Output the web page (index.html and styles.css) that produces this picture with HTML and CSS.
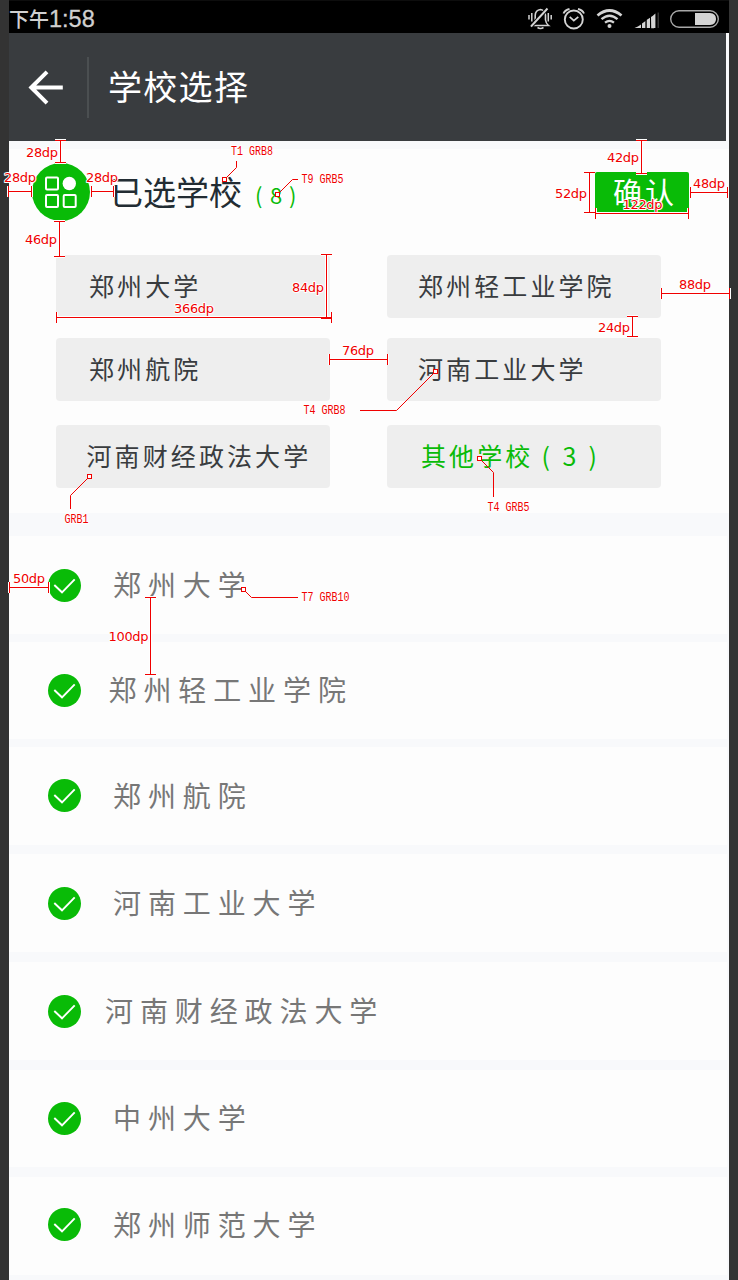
FILE: index.html
```html
<!DOCTYPE html>
<html lang="zh-CN">
<head>
<meta charset="utf-8">
<title>学校选择</title>
<link rel="stylesheet" href="styles.css">
</head>
<body>
<div class="phone">
  <div class="status">
    <div class="clock"><span class="clock-cn">下午</span><span class="clock-num">1:58</span></div>
    <svg class="status-icons" width="196" height="33" viewBox="526 0 196 33">
      <g fill="none" stroke="#d4d4d4" stroke-width="1.6">
        <path d="M532.500 25.500H548.500Q546 23.500 545.500 20V15.500Q545 10 540.500 9.500Q535.500 10 535.200 15.500V20Q535 23.500 532.500 25.500Z"/>
        <path d="M531 26.500L547.500 8.500" stroke="#000" stroke-width="4"/>
        <path d="M531 26.500L547.500 8.500" stroke-width="1.900"/>
        <path d="M537.500 27.500Q540.500 29.500 543.500 27.500"/>
        <path d="M529 15V19.500M531.800 13V21.500M548.300 13V21.500M551.200 15V19.500" stroke-width="1.500"/>
        <circle cx="573.800" cy="19.500" r="9" stroke-width="1.900"/>
        <path d="M569.700 16.800L573.800 20.700L578.300 16.800" stroke-width="1.700"/>
        <path d="M563.500 13.500Q565 10 569.500 9M578 9Q582.500 10 584 13.500" stroke-width="1.900"/>
        <path d="M597.500 15.500Q609.500 5.500 621.500 15.500" stroke-width="2.800"/>
        <path d="M601.500 19.200Q609.500 12.300 617.500 19.200" stroke-width="2.400"/>
        <path d="M605 22.700Q609.500 19 614 22.700" stroke-width="2.200"/>
      </g>
      <g fill="#d4d4d4">
        <circle cx="609.500" cy="26" r="2"/>
        <path d="M634.500 28Q638 26.500 641 24.500V28ZM642 23.500L645.500 21V28H642ZM646.500 20L650 17.800V28H646.500ZM651 17L654 15V28.300H651.200ZM652 16.500L655.400 13.500V28H652Z"/>
        <path d="M641.100 14h.8v14h-.8zM645.700 14h.8v14h-.8zM650.200 14h.8v14h-.8z" fill="#000"/>
        <path d="M657.500 12.500h1.500V28h-1.500z" fill="#333"/>
        <path d="M695 13H710Q716 13.500 716 19Q716 24.500 710 25H695Z"/>
      </g>
      <rect x="670.700" y="10.700" width="47.600" height="16.600" rx="8.300" fill="none" stroke="#a8a8a8" stroke-width="1.400"/>
    </svg>
  </div>

  <div class="header">
    <svg class="back" width="36" height="36" viewBox="28 70 36 36" fill="none" stroke="#fff" stroke-width="4">
      <path d="M47 71.800L31.300 87.500L47 103.200M31.500 87.500H62.800"/>
    </svg>
    <div class="divider"></div>
    <h1 class="title">学校选择</h1>
  </div>

  <div class="panel">
    <div class="picked">
      <svg class="picked-icon" width="58" height="58" viewBox="0 0 58 58">
        <circle cx="29" cy="29" r="29" fill="#09bb07"/>
        <g fill="none" stroke="#fff" stroke-width="2">
          <rect x="14" y="14.500" width="12" height="12" rx="1"/>
          <rect x="14" y="32" width="12" height="12" rx="1"/>
          <rect x="31.700" y="32" width="12" height="12" rx="1"/>
        </g>
        <circle cx="37.300" cy="20.500" r="6.700" fill="#fff"/>
      </svg>
      <span class="picked-label">已选学校</span>
      <span class="picked-count"><i>(</i><i>8</i><i>)</i></span>
      <button class="confirm">确认</button>
    </div>
    <div class="chips">
      <div class="chip">郑州大学</div>
      <div class="chip chip-right">郑州轻工业学院</div>
      <div class="chip">郑州航院</div>
      <div class="chip chip-right">河南工业大学</div>
      <div class="chip chip-long">河南财经政法大学</div>
      <div class="chip chip-other">其他学校<i>(</i><i>3</i><i>)</i></div>
    </div>
  </div>

  <div class="list">
    <div class="row r1"><svg class="check" viewBox="0 0 33 33"><circle cx="16.500" cy="16.500" r="16.500"/><path d="M6.300 16L14 23.300L26.700 10.300"/></svg><span>郑州大学</span></div>
    <div class="row r2"><svg class="check" viewBox="0 0 33 33"><circle cx="16.500" cy="16.500" r="16.500"/><path d="M6.300 16L14 23.300L26.700 10.300"/></svg><span>郑州轻工业学院</span></div>
    <div class="row r3"><svg class="check" viewBox="0 0 33 33"><circle cx="16.500" cy="16.500" r="16.500"/><path d="M6.300 16L14 23.300L26.700 10.300"/></svg><span>郑州航院</span></div>
    <div class="row r4"><svg class="check" viewBox="0 0 33 33"><circle cx="16.500" cy="16.500" r="16.500"/><path d="M6.300 16L14 23.300L26.700 10.300"/></svg><span>河南工业大学</span></div>
    <div class="row r5"><svg class="check" viewBox="0 0 33 33"><circle cx="16.500" cy="16.500" r="16.500"/><path d="M6.300 16L14 23.300L26.700 10.300"/></svg><span>河南财经政法大学</span></div>
    <div class="row r6"><svg class="check" viewBox="0 0 33 33"><circle cx="16.500" cy="16.500" r="16.500"/><path d="M6.300 16L14 23.300L26.700 10.300"/></svg><span>中州大学</span></div>
    <div class="row r7"><svg class="check" viewBox="0 0 33 33"><circle cx="16.500" cy="16.500" r="16.500"/><path d="M6.300 16L14 23.300L26.700 10.300"/></svg><span>郑州师范大学</span></div>
  </div>
</div>

<!-- Dimension lines and style callouts -->
<svg class="specs" width="738" height="1280" viewBox="0 0 738 1280">
  <defs>
    <path id="dims" d="M55 140.500H66M60.500 140V163M55 162.500H66
      M8.500 186V197M8 191.500H32M31.500 186V197
      M91.500 186V197M91 191.500H114M113.500 186V197
      M54 221.500H65M59.500 221V257M54 256.500H65
      M636 140.500H647M641.500 140V174M636 173.500H647
      M584 172.500H595M589.500 172V213M584 212.500H595
      M595.500 208V219M595 213.500H689M688.500 208V219
      M690.500 187V198M690 192.500H728M727.500 187V198
      M56.500 312V323M56 317.500H332M331.500 312V323
      M321 254.500H332M326.500 254V319M321 318.500H332
      M329.500 354V365M329 359.500H388M387.500 354V365
      M661.500 288V299M661 293.500H730M729.500 288V299
      M627 316.500H638M632.500 316V337M627 336.500H638
      M9.500 582V593M9 587.500H49M48.500 582V593
      M145 597.500H156M150.500 597V675M145 674.500H156"/>
  </defs>
  <use href="#dims" class="halo"/>
  <use href="#dims" class="dim"/>
  <g class="leader">
    <path d="M236.500 161V167.500L226.500 177.500"/>
    <path d="M298 179.500H292.500L279.500 192.500"/>
    <path d="M360 410.500H396.500L433.500 373.500"/>
    <path d="M70.500 509V495.500L87.500 478.500"/>
    <path d="M493.500 497V472.500L481.500 460.500"/>
    <path d="M298 597.500H251.500L245.500 591.500"/>
  </g>
  <g class="anchor">
    <rect x="222.500" y="177.500" width="4" height="4"/>
    <rect x="275.500" y="192.500" width="4" height="4"/>
    <rect x="433.500" y="369.500" width="4" height="4"/>
    <rect x="87.500" y="474.500" width="4" height="4"/>
    <rect x="477.500" y="456.500" width="4" height="4"/>
    <rect x="241.500" y="587.500" width="4" height="4"/>
  </g>
  <g class="dp">
    <text x="26" y="157" textLength="32">28dp</text>
    <text x="4" y="182" textLength="32">28dp</text>
    <text x="86" y="182" textLength="32">28dp</text>
    <text x="25" y="244" textLength="32">46dp</text>
    <text x="607" y="162" textLength="32">42dp</text>
    <text x="555" y="198" textLength="32">52dp</text>
    <text x="693" y="188" textLength="32">48dp</text>
    <text x="622.500" y="209" textLength="40">122dp</text>
    <text x="292" y="292" textLength="32">84dp</text>
    <text x="174" y="313" textLength="40">366dp</text>
    <text x="342" y="355" textLength="32">76dp</text>
    <text x="679" y="289" textLength="32">88dp</text>
    <text x="598" y="332" textLength="32">24dp</text>
    <text x="13" y="583" textLength="32">50dp</text>
    <text x="108.500" y="641" textLength="40">100dp</text>
  </g>
  <g class="code">
    <text x="231" y="155" textLength="42" lengthAdjust="spacingAndGlyphs">T1 GRB8</text>
    <text x="301.500" y="183" textLength="42" lengthAdjust="spacingAndGlyphs">T9 GRB5</text>
    <text x="303.500" y="414" textLength="42" lengthAdjust="spacingAndGlyphs">T4 GRB8</text>
    <text x="64.500" y="523" textLength="24" lengthAdjust="spacingAndGlyphs">GRB1</text>
    <text x="487.500" y="511" textLength="42" lengthAdjust="spacingAndGlyphs">T4 GRB5</text>
    <text x="301.500" y="601" textLength="48" lengthAdjust="spacingAndGlyphs">T7 GRB10</text>
  </g>
</svg>
</body>
</html>
```
FILE: styles.css
```css
* { box-sizing: border-box; }
body {
  margin: 0;
  width: 738px;
  height: 1280px;
  overflow: hidden;
  padding: 0 9px;
  background: #333;
  position: relative;
  font-family: "Noto Sans CJK SC", sans-serif;
}
i { font-style: normal; }
.phone { width: 720px; height: 1280px; background: #f8f9fb; overflow: hidden; }

.status {
  height: 33px;
  background: #000;
  border-top: 1px solid #0d0d0d;
  display: flex;
  justify-content: space-between;
  align-items: flex-start;
  padding-right: 7px;
  color: #d0d0d0;
}
.status-icons { display: block; margin-top: -1px; }
.clock { display: flex; align-items: baseline; line-height: 35px; }
.clock-cn { font-size: 20px; font-weight: 500; }
.clock-num { font: 23.5px/35px "Liberation Sans", sans-serif; -webkit-text-stroke: 0.3px #d0d0d0; }

.header {
  width: 717px;
  height: 108px;
  background: #393c3f;
  display: flex;
  align-items: center;
  padding-left: 19px;
  color: #fff;
}
.back { display: block; margin-top: 1px; }
.divider { width: 2px; height: 61px; margin-left: 23px; background: #4b4f51; }
.title { margin: -2px 0 0 19px; font-size: 34px; font-weight: 400; letter-spacing: 1.3px; line-height: 50px; }

.panel { margin-top: 8px; height: 364px; background: #fdfdfd; padding-top: 13px; }
.picked { display: flex; align-items: flex-start; height: 93px; padding: 1px 40px 0 23px; }
.picked-label { margin-left: 20px; font-size: 33px; line-height: 56px; color: #222c33; }
.picked-count {
  display: grid;
  grid-template-columns: 15px 19px 10px;
  margin-left: 13px;
  font-size: 22px;
  line-height: 62px;
  color: #09bb07;
}
.confirm {
  width: 94px;
  height: 41px;
  margin: 9px 0 0 auto;
  padding: 0 0 0 6px;
  border: 0;
  border-radius: 2px;
  background: #09bb07;
  color: #fff;
  font: 29px/38px "Noto Sans CJK SC", sans-serif;
  letter-spacing: 3px;
  display: flex;
  justify-content: center;
  align-items: flex-start;
}
.chips {
  display: grid;
  grid-template-columns: 274px 274px;
  grid-template-rows: 63px 63px 63px;
  column-gap: 57px;
  row-gap: 20px;
  padding-left: 47px;
}
.chip {
  padding-left: 33px;
  border-radius: 4px;
  background: #eee;
  color: #393c3f;
  font-size: 25px;
  letter-spacing: 3.100px;
  line-height: 60px;
  white-space: nowrap;
}
.chip-right { padding-left: 31px; }
.chip-long, .chip-other { margin-top: 4px; height: 63px; }
.chip-long { padding-left: 30.500px; }
.chip-other { display: flex; padding-left: 34px; color: #09bb07; }
.chip-other i:first-of-type { margin-left: 8px; width: 21px; }
.chip-other i:nth-of-type(2) { width: 26px; }

.list { margin-top: 23px; width: 718px; }
.row {
  display: flex;
  align-items: flex-start;
  height: 98px;
  padding: 33px 0 0 39px;
  margin-bottom: 8px;
  background: #fdfdfd;
  color: #777;
  font-size: 28px;
  letter-spacing: 6.900px;
  line-height: 30px;
}
.row span { margin-left: 32px; }
.check { width: 33px; height: 33px; flex: none; }
.check circle { fill: #09bb07; }
.check path { fill: none; stroke: #fff; stroke-width: 1.900; }
.r2, .r3 { padding-top: 32px; }
.r2 { height: 97px; }
.r2 span { margin-left: 27.500px; }
.r3 { margin-bottom: 9px; }
.r3 span { margin-top: 1px; }
.r4, .r5, .r6 { margin-bottom: 10px; }
.r5 span { margin-left: 24px; }
.r6 { height: 97px; padding-top: 32px; }
.r7 { padding-top: 31px; }
.r7 span { margin-top: 1px; }

.specs { position: absolute; left: 0; top: 0; }
.halo { fill: none; stroke: #fff; stroke-width: 3; }
.dim { fill: none; stroke: #f00000; stroke-width: 1; }
.leader { fill: none; stroke: #f00000; stroke-width: 1; }
.anchor { fill: #fff; stroke: #f00000; stroke-width: 1; }
.dp, .code { fill: #f00000; stroke: #fff; stroke-width: 2px; paint-order: stroke; stroke-linejoin: round; }
.dp { font: 13px "DejaVu Sans", sans-serif; }
.code { font: 12px "Liberation Mono", monospace; }
```
